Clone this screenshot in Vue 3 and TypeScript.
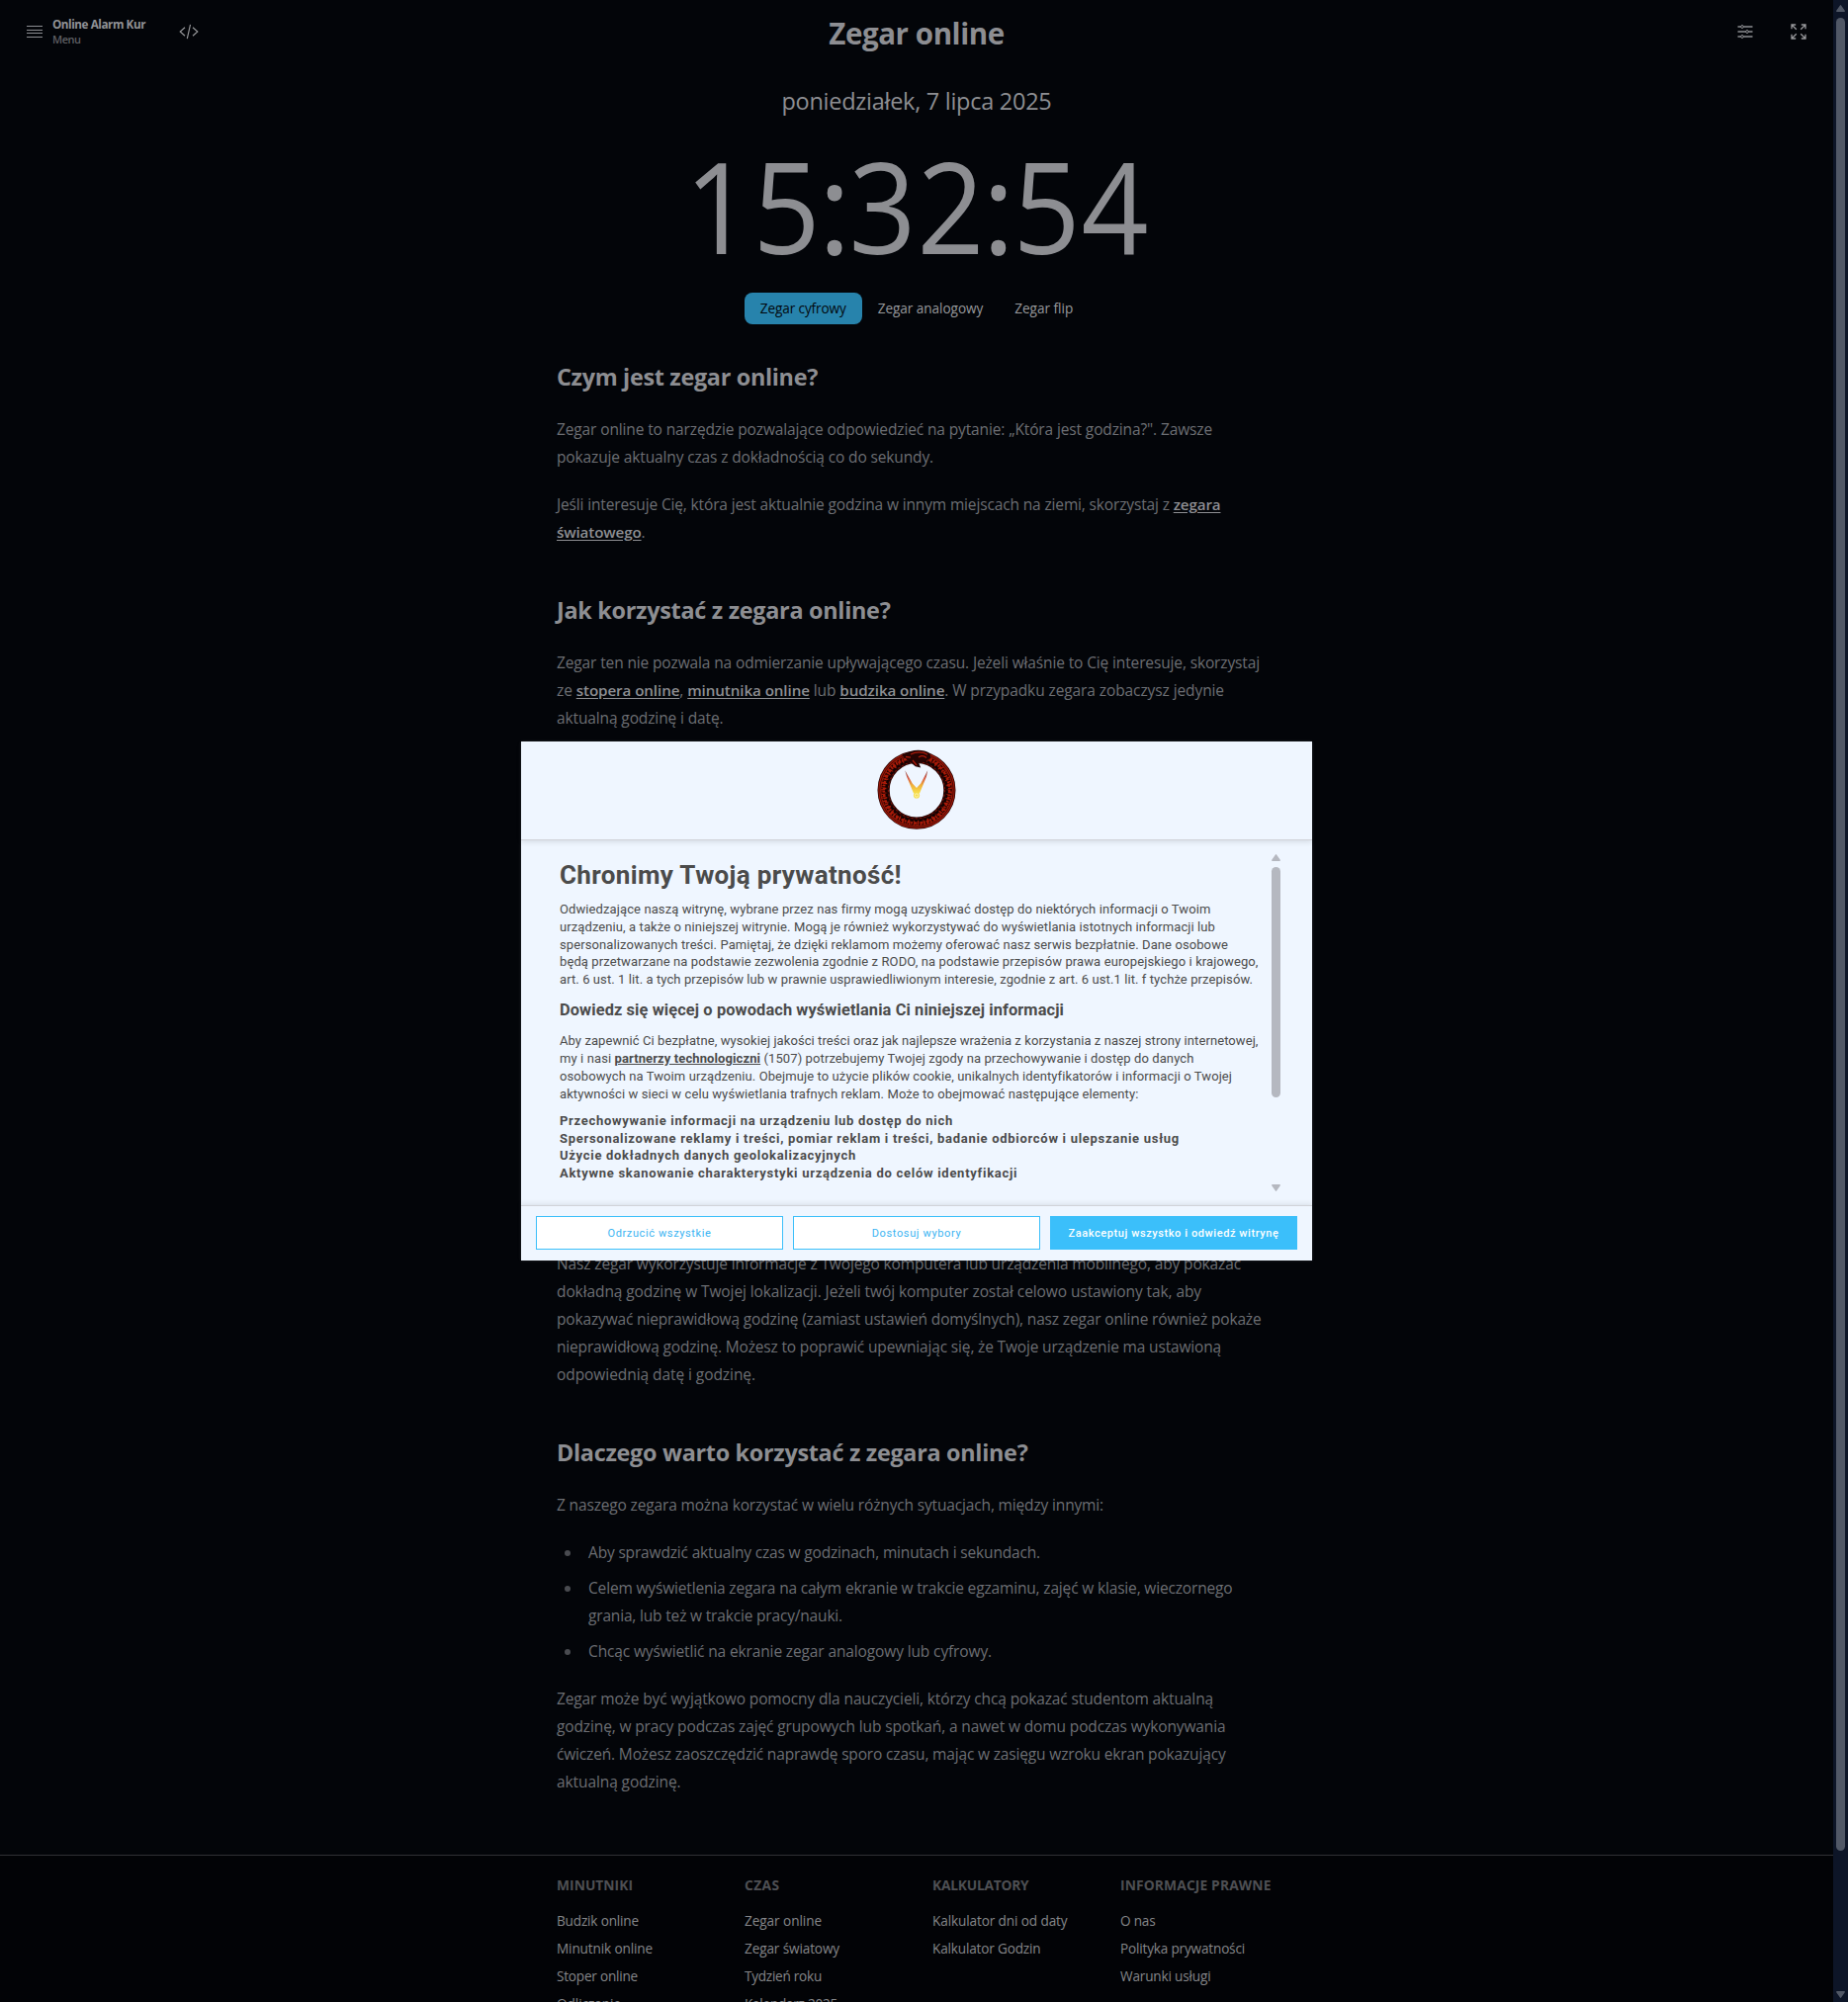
<script setup lang="ts">
import { ref } from 'vue'

interface LinkItem { label: string; width: number }
interface LinkGroup { title: string; width: number; links: LinkItem[] }

// Tracks a line of text out or in so that it takes the given measure in pixels.
const vFit = {
  mounted(el: HTMLElement, binding: { value: number }) {
    const base = parseFloat(getComputedStyle(el).letterSpacing) || 0
    const count = (el.textContent || '').trim().length
    const delta = (binding.value - 1 - el.getBoundingClientRect().width) / count
    el.style.letterSpacing = `${(base + delta).toFixed(4)}px`
  },
}

const time = ref('15:32:54')
const tabs = [
  { label: 'Zegar cyfrowy', width: 88, active: true },
  { label: 'Zegar analogowy', width: 107.5, active: false },
  { label: 'Zegar flip', width: 60, active: false },
]

const groups: LinkGroup[] = [
  {
    title: 'MINUTNIKI', width: 78, links: [
      { label: 'Budzik online', width: 84 },
      { label: 'Minutnik online', width: 98 },
      { label: 'Stoper online', width: 83 },
      { label: 'Odliczanie', width: 66 },
    ],
  },
  {
    title: 'CZAS', width: 36.5, links: [
      { label: 'Zegar online', width: 79 },
      { label: 'Zegar światowy', width: 97 },
      { label: 'Tydzień roku', width: 79 },
      { label: 'Kalendarz 2025', width: 95 },
    ],
  },
  {
    title: 'KALKULATORY', width: 98.5, links: [
      { label: 'Kalkulator dni od daty', width: 137.5 },
      { label: 'Kalkulator Godzin', width: 110.5 },
    ],
  },
  {
    title: 'INFORMACJE PRAWNE', width: 153.5, links: [
      { label: 'O nas', width: 36.5 },
      { label: 'Polityka prywatności', width: 127 },
      { label: 'Warunki usługi', width: 92.5 },
    ],
  },
]
</script>

<template>
  <div class="screen">
    <div class="page">
      <header class="top">
        <div class="side">
          <button class="menu">
            <svg width="16" height="14" viewBox="0 0 16 14"><path d="M0 1.5h16M0 5.5h16M0 8.5h16M0 12.5h16" stroke="#8c8d91" stroke-width="1" /></svg>
            <span class="brand">
              <span class="ln name" v-fit="95">Online Alarm Kur</span>
              <span class="ln sub" v-fit="29.5">Menu</span>
            </span>
          </button>
          <svg class="code" width="20" height="16" viewBox="0 0 20 16" fill="none" stroke="#97989b" stroke-width="1.15"><path d="M6 3.7 1.2 8 6 12.3M14 3.7 18.8 8 14 12.3M11.5.8 8.3 15.2" /></svg>
        </div>
        <h1><span class="ln" v-fit="178.5">Zegar online</span></h1>
        <div class="side right">
          <svg width="16" height="14" viewBox="0 0 16 14" fill="#030509" stroke="#8c8d91"><path d="M.5 2h15M.5 7h15M.5 12h15" stroke-width="1.3" /><circle cx="5" cy="2" r="1.4" /><circle cx="10" cy="7" r="1.4" /><circle cx="5" cy="12" r="1.4" /></svg>
          <svg class="expand" width="16" height="16" viewBox="0 0 16 16" fill="none" stroke="#97989b" stroke-width="1.3"><path d="M1 5.2V1h4.2M1 1l4.8 4.8M10.8 1H15v4.2M15 1l-4.8 4.8M1 10.8V15h4.2M1 15l4.8-4.8M15 10.8V15h-4.2M15 15l-4.8-4.8" /></svg>
        </div>
      </header>

      <div class="date"><span class="ln" v-fit="274">poniedziałek, 7 lipca 2025</span></div>
      <div class="clock">
        <span v-for="(c, i) in time" :key="i" :class="c === ':' ? 'colon' : 'digit'">{{ c }}</span>
      </div>
      <nav class="tabs">
        <a v-for="t in tabs" :key="t.label" :class="{ active: t.active }"><span class="ln" v-fit="t.width">{{ t.label }}</span></a>
      </nav>

      <main class="prose">
        <h2><span class="ln" v-fit="265">Czym jest zegar online?</span></h2>
        <p>
          <span class="ln" v-fit="664">Zegar online to narzędzie pozwalające odpowiedzieć na pytanie: „Która jest godzina?". Zawsze</span>
          <span class="ln" v-fit="382">pokazuje aktualny czas z dokładnością co do sekundy.</span>
        </p>
        <p>
          <span class="ln" v-fit="672.5">Jeśli interesuje Cię, która jest aktualnie godzina w innym miejscach na ziemi, skorzystaj z <a>zegara</a></span>
          <span class="ln" v-fit="90.5"><a>światowego</a>.</span>
        </p>
        <h2><span class="ln" v-fit="338.5">Jak korzystać z zegara online?</span></h2>
        <p>
          <span class="ln" v-fit="712">Zegar ten nie pozwala na odmierzanie upływającego czasu. Jeżeli właśnie to Cię interesuje, skorzystaj</span>
          <span class="ln" v-fit="676">ze <a>stopera online</a>, <a>minutnika online</a> lub <a>budzika online</a>. W przypadku zegara zobaczysz jedynie</span>
          <span class="ln" v-fit="169.5">aktualną godzinę i datę.</span>
        </p>
        <p class="covered">
          <span class="ln" v-fit="693">Nasz zegar wykorzystuje informacje z Twojego komputera lub urządzenia mobilnego, aby pokazać</span>
          <span class="ln" v-fit="653">dokładną godzinę w Twojej lokalizacji. Jeżeli twój komputer został celowo ustawiony tak, aby</span>
          <span class="ln" v-fit="713.5">pokazywać nieprawidłową godzinę (zamiast ustawień domyślnych), nasz zegar online również pokaże</span>
          <span class="ln" v-fit="673">nieprawidłową godzinę. Możesz to poprawić upewniając się, że Twoje urządzenie ma ustawioną</span>
          <span class="ln" v-fit="202">odpowiednią datę i godzinę.</span>
        </p>
        <h2><span class="ln" v-fit="477.5">Dlaczego warto korzystać z zegara online?</span></h2>
        <p><span class="ln" v-fit="554">Z naszego zegara można korzystać w wielu różnych sytuacjach, między innymi:</span></p>
        <ul>
          <li><span class="ln" v-fit="458">Aby sprawdzić aktualny czas w godzinach, minutach i sekundach.</span></li>
          <li>
            <span class="ln" v-fit="652.5">Celem wyświetlenia zegara na całym ekranie w trakcie egzaminu, zajęć w klasie, wieczornego</span>
            <span class="ln" v-fit="258">grania, lub też w trakcie pracy/nauki.</span>
          </li>
          <li><span class="ln" v-fit="409">Chcąc wyświetlić na ekranie zegar analogowy lub cyfrowy.</span></li>
        </ul>
        <p>
          <span class="ln" v-fit="665">Zegar może być wyjątkowo pomocny dla nauczycieli, którzy chcą pokazać studentom aktualną</span>
          <span class="ln" v-fit="677.5">godzinę, w pracy podczas zajęć grupowych lub spotkań, a nawet w domu podczas wykonywania</span>
          <span class="ln" v-fit="677.5">ćwiczeń. Możesz zaoszczędzić naprawdę sporo czasu, mając w zasięgu wzroku ekran pokazujący</span>
          <span class="ln" v-fit="126.5">aktualną godzinę.</span>
        </p>
      </main>

      <footer class="foot">
        <div class="cols">
          <div v-for="g in groups" :key="g.title">
            <h3><span class="ln" v-fit="g.width">{{ g.title }}</span></h3>
            <a v-for="l in g.links" :key="l.label"><span class="ln" v-fit="l.width">{{ l.label }}</span></a>
          </div>
        </div>
      </footer>
    </div>

    <div class="bar">
      <svg width="9" height="7" viewBox="0 0 9 7"><path d="M4.5.8 8.2 6.2H.8Z" /></svg>
      <i></i>
      <svg class="down" width="9" height="7" viewBox="0 0 9 7"><path d="M4.5 6.2.8.8h7.4Z" /></svg>
    </div>

    <section class="modal">
      <div class="logo">
        <svg width="84" height="84" viewBox="0 0 84 84">
          <defs>
            <linearGradient id="hand" x1="0" y1="0" x2="0" y2="1"><stop offset="0" stop-color="#8a4a48" /><stop offset=".35" stop-color="#d9604a" /><stop offset=".65" stop-color="#f0b23c" /><stop offset="1" stop-color="#f8e24a" /></linearGradient>
          </defs>
          <circle cx="42" cy="42.3" r="33.4" fill="none" stroke="#2a0503" stroke-width="12.2" />
          <circle cx="42" cy="42.3" r="37.2" fill="none" stroke="#a01808" stroke-width="3" />
          <circle cx="42" cy="42.3" r="33.2" fill="none" stroke="#a81a08" stroke-width="5" stroke-dasharray="3.1 1.1 1.7 .6" />
          <circle cx="42" cy="42.3" r="35" fill="none" stroke="#170302" stroke-width="1.2" stroke-dasharray="1.3 2.4" />
          <circle cx="42" cy="42.3" r="30.6" fill="none" stroke="#120202" stroke-width="2.6" stroke-dasharray="3 1.7" />
          <circle cx="42" cy="42.3" r="28.6" fill="none" stroke="#751006" stroke-width="1.2" stroke-dasharray="2 2.4" />
          <circle cx="42" cy="42.3" r="37.2" fill="none" stroke="#260403" stroke-width=".7" />
          <path d="M27 7C35 2 43 .8 50 2.6c4 .8 6.4 3 6 6.4l-4 4-8 1.2 2.2 5.4-5.4-1.4-5.4-4.4Z" fill="#250403" />
          <path d="M36 6c5-2.5 12-3 17 .2M38 12l4 5M44 9c3-2 6-1.4 8 .4M31 8.5l5 .7" fill="none" stroke="#a91a0b" stroke-width="1.3" />
          <path d="M30.3 22.3 37.8 35.6 42 40 46.2 35.6 53.2 22.3 52 28.5 45 45.5H39L32 28.5Z" fill="url(#hand)" />
          <circle cx="42" cy="47.5" r="3.1" fill="#f4dc52" />
          <circle cx="42" cy="47.5" r="1.7" fill="none" stroke="#fff7b0" stroke-width=".9" />
        </svg>
      </div>
      <div class="consent">
        <div class="copy">
          <h4><span class="ln" v-fit="347">Chronimy Twoją prywatność!</span></h4>
          <p>
            <span class="ln" v-fit="659">Odwiedzające naszą witrynę, wybrane przez nas firmy mogą uzyskiwać dostęp do niektórych informacji o Twoim</span>
            <span class="ln" v-fit="664">urządzeniu, a także o niniejszej witrynie. Mogą je również wykorzystywać do wyświetlania istotnych informacji lub</span>
            <span class="ln" v-fit="677">spersonalizowanych treści. Pamiętaj, że dzięki reklamom możemy oferować nasz serwis bezpłatnie. Dane osobowe</span>
            <span class="ln" v-fit="707.5">będą przetwarzane na podstawie zezwolenia zgodnie z RODO, na podstawie przepisów prawa europejskiego i krajowego,</span>
            <span class="ln" v-fit="702">art. 6 ust. 1 lit. a tych przepisów lub w prawnie usprawiedliwionym interesie, zgodnie z art. 6 ust.1 lit. f tychże przepisów.</span>
          </p>
          <h5><span class="ln" v-fit="511">Dowiedz się więcej o powodach wyświetlania Ci niniejszej informacji</span></h5>
          <p>
            <span class="ln" v-fit="707.5">Aby zapewnić Ci bezpłatne, wysokiej jakości treści oraz jak najlepsze wrażenia z korzystania z naszej strony internetowej,</span>
            <span class="ln" v-fit="642.5">my i nasi <b>partnerzy technologiczni</b> (1507) potrzebujemy Twojej zgody na przechowywanie i dostęp do danych</span>
            <span class="ln" v-fit="680.5">osobowych na Twoim urządzeniu. Obejmuje to użycie plików cookie, unikalnych identyfikatorów i informacji o Twojej</span>
            <span class="ln" v-fit="586.5">aktywności w sieci w celu wyświetlania trafnych reklam. Może to obejmować następujące elementy:</span>
          </p>
          <div class="points">
            <span class="ln" v-fit="399">Przechowywanie informacji na urządzeniu lub dostęp do nich</span>
            <span class="ln" v-fit="628">Spersonalizowane reklamy i treści, pomiar reklam i treści, badanie odbiorców i ulepszanie usług</span>
            <span class="ln" v-fit="301">Użycie dokładnych danych geolokalizacyjnych</span>
            <span class="ln" v-fit="464">Aktywne skanowanie charakterystyki urządzenia do celów identyfikacji</span>
          </div>
        </div>
        <div class="inner-bar">
          <svg width="9" height="7" viewBox="0 0 9 7"><path d="M4.5.8 8.2 6.2H.8Z" /></svg>
          <i></i>
          <svg class="down" width="9" height="7" viewBox="0 0 9 7"><path d="M4.5 6.2.8.8h7.4Z" /></svg>
        </div>
      </div>
      <div class="actions">
        <button><span class="ln" v-fit="106">Odrzucić wszystkie</span></button>
        <button><span class="ln" v-fit="91.5">Dostosuj wybory</span></button>
        <button class="primary"><span class="ln" v-fit="214">Zaakceptuj wszystko i odwiedź witrynę</span></button>
      </div>
    </section>
  </div>
</template>

<style>
html, body { margin: 0; background: #030509; }
</style>

<style scoped>
* { box-sizing: border-box; }
h1, h2, h3, h4, h5, p, ul { margin: 0; padding: 0; }
button { border: 0; padding: 0; background: none; font: inherit; color: inherit; }
svg { display: block; flex: none; }
.screen { position: relative; display: flex; width: 1869px; height: 2025px; overflow: hidden; background: #030509; font-family: "Open Sans", "Noto Sans", sans-serif; color: #8d8e92; }
.page { width: 1854px; height: 2025px; overflow: hidden; display: flex; flex-direction: column; align-items: center; }
.ln { display: table; white-space: nowrap; }
.top { width: 100%; height: 64px; flex: none; display: flex; justify-content: space-between; align-items: center; padding: 0 27px; }
.side { flex: 1; display: flex; align-items: center; }
.side.right { justify-content: flex-end; gap: 38px; }
.menu { display: flex; align-items: center; gap: 10px; text-align: left; }
.name { font-size: 11.7px; line-height: 15px; font-weight: 700; color: #919296; }
.sub { font-size: 11px; line-height: 15px; font-weight: 600; color: #5e5f63; }
.code { margin-left: 34px; }
h1 { font-size: 29.5px; line-height: 36px; font-weight: 700; color: #8d8e92; margin-top: 3px; }
.date { margin-top: 22px; font-size: 23.5px; line-height: 32px; }
.clock { display: flex; height: 128px; margin-top: 26px; font-size: 128px; line-height: 128px; color: #8d8e92; }
.digit { width: 69px; display: flex; justify-content: center; transform: scaleX(.93); }
.colon { width: 27.8px; display: flex; justify-content: center; }
.tabs { display: flex; margin-top: 24px; font-size: 13.6px; line-height: 20px; }
.tabs a { padding: 6px 16px; border-radius: 8px; color: #97989b; }
.tabs a.active { background: #2783ac; color: #02080d; }
.prose { width: 728px; margin-top: 36px; font-size: 15.5px; line-height: 28px; color: #6c6e73; height: 1512px; flex: none; }
.prose h2 { font-size: 23.4px; line-height: 32px; font-weight: 700; color: #8d8e92; margin: 48px 0 24px; }
.prose h2:first-child { margin-top: 0; }
.prose h2 .ln { transform: translateY(1px); }
.prose p + p { margin-top: 20px; }
.prose p.covered { margin-top: 524px; }
.prose a { font-weight: 600; font-size: 15.2px; color: #8d8e92; text-decoration: underline; text-underline-offset: 2px; }
.prose ul { list-style: none; margin: 20px 0; }
.prose li { position: relative; padding-left: 32px; }
.prose li + li { margin-top: 8px; }
.prose li::before { content: ""; position: absolute; left: 8px; top: 12px; width: 6px; height: 6px; border-radius: 50%; background: #494b50; }
.foot { width: 100%; flex: 1; border-top: 1px solid #303135; background: #020306; display: flex; justify-content: center; }
.cols { display: grid; grid-template-columns: repeat(4, 190px); width: 728px; padding-top: 20px; }
.cols h3 { font-size: 13.8px; line-height: 20px; font-weight: 700; color: #4e4f53; margin-bottom: 12px; }
.cols a { display: block; font-size: 13.6px; line-height: 28px; color: #858689; }
.bar { width: 15px; height: 2025px; background: #0d1527; display: flex; flex-direction: column; align-items: center; padding: 5px 0 4px; }
.bar i { width: 9px; height: 1854px; margin-top: 6px; border-radius: 5px; background: #515866; }
.down { margin-top: auto; }
.bar path { fill: #515866; stroke: #515866; stroke-linejoin: round; stroke-width: 1.4; }
.modal { position: absolute; left: 527px; top: 750px; width: 800px; height: 525px; background: #eff6ff; font-family: Roboto, sans-serif; color: #4b4b4b; display: flex; flex-direction: column; box-shadow: 0 0 3px rgba(255, 255, 255, .15); }
.logo { height: 100px; flex: none; display: flex; justify-content: center; padding-top: 7px; border-bottom: 1px solid #d0d3d8; box-shadow: 0 2px 5px rgba(0, 0, 0, .1); }
.consent { flex: 1; display: flex; padding: 14px 32px 0 39px; }
.copy { flex: 1; }
h4 { font-size: 26px; line-height: 30px; font-weight: 700; margin-top: 6px; }
.copy p, .points { font-size: 13px; line-height: 17.75px; }
.copy p { margin-top: 11px; }
h5 { font-size: 16.4px; line-height: 20px; font-weight: 700; margin-top: 12px; }
.copy h5 + p { margin-top: 12.5px; }
.copy b { font-weight: 700; text-decoration: underline; }
.points { margin-top: 9.5px; font-weight: 700; }
.inner-bar { width: 9px; display: flex; flex-direction: column; height: 341px; }
.inner-bar i { height: 233px; margin-top: 6px; border-radius: 5px; background: #b5b8c0; }
.inner-bar path { fill: #b5b8c0; stroke: #b5b8c0; stroke-linejoin: round; stroke-width: 1.4; }
.actions { height: 56px; flex: none; display: flex; gap: 10px; padding: 10px 15px 0; border-top: 1px solid #d0d3d8; box-shadow: 0 -2px 5px rgba(0, 0, 0, .08); }
.actions button { width: 250px; height: 34px; border: 1px solid #3bbffa; background: #fff; color: #3bb4f2; font-size: 11px; display: flex; align-items: center; justify-content: center; }
.actions .primary { background: #3bbffa; color: #fff; font-weight: 500; }
</style>
